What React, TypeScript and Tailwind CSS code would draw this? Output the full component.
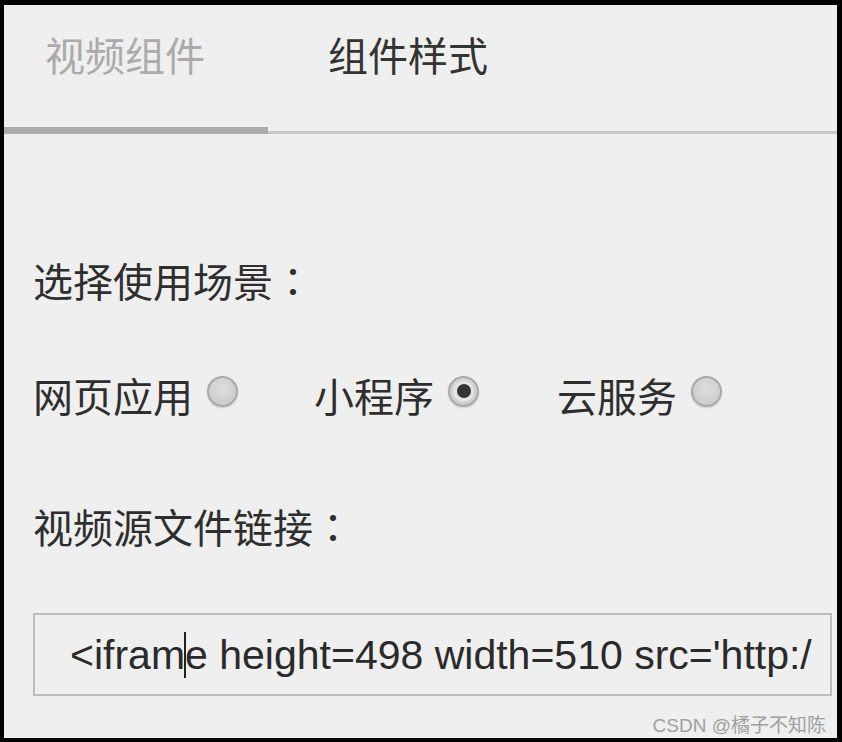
import React from 'react';

const cjk = "font-['Noto_Sans_CJK_SC','Noto_Sans',sans-serif]";

interface RadioProps {
  label: string;
  checked?: boolean;
  className?: string;
}

function Radio({ label, checked, className }: RadioProps) {
  return (
    <div className={`flex items-center ${className || ''}`}>
      <span className="text-[40px] leading-[40px] text-[#2e2e2e]">{label}</span>
      <span className="ml-[14px] mb-[8px] flex h-[31px] w-[31px] items-center justify-center rounded-full border-2 border-[#a9a9a9] bg-[radial-gradient(circle_at_50%_40%,#dedede,#c6c6c6)] shadow-[0_1px_2px_rgba(0,0,0,0.15)]">
        {checked && (
          <span className="flex h-[21px] w-[21px] items-center justify-center rounded-full bg-[#e4e4e4]">
            <span className="h-[14px] w-[14px] rounded-full bg-[#333]" />
          </span>
        )}
      </span>
    </div>
  );
}

// full-width colon sits centred in its cell, as in the TC face
const Colon = () => <span className="font-['Noto_Sans_CJK_TC',sans-serif]">：</span>;

export default function App() {
  return (
    <div className="h-[742px] w-[842px] bg-black pt-[5px] pl-[4px] pr-[5px] pb-[4px]">
      <div className={`relative flex h-full w-full flex-col bg-[#efefef] ${cjk}`}>
        {/* tabs */}
        <div className="flex h-[129px] border-b-[3px] border-[#c6c6c6]">
          <div className="mb-[-3px] h-[129px] w-[264px] border-b-[7px] border-[#ababab] pl-[41px] pt-[29px]">
            <span className="text-[40px] leading-[40px] text-[#ababab]">视频组件</span>
          </div>
          <div className="pl-[60px] pt-[29px]">
            <span className="text-[40px] leading-[40px] text-[#333]">组件样式</span>
          </div>
        </div>

        <div className="mt-[126px] pl-[29px] text-[40px] leading-[40px] text-[#2e2e2e]">
          选择使用场景<Colon />
        </div>

        <div className="mt-[75px] flex pl-[29px]">
          <Radio label="网页应用" />
          <Radio label="小程序" checked className="ml-[76px]" />
          <Radio label="云服务" className="ml-[78px]" />
        </div>

        <div className="mt-[91px] pl-[29px] text-[40px] leading-[40px] text-[#2e2e2e]">
          视频源文件链接<Colon />
        </div>

        <div className="ml-[29px] mt-[67px] flex h-[83px] w-[799px] items-center border-2 border-[#bdbdbd] pl-[35px] pr-[10px]">
          <div className="overflow-hidden whitespace-nowrap font-['Liberation_Sans',Arial,sans-serif] text-[41px] leading-[46px] text-[#2a2a2a]">
            &lt;ifram
            <span className="mx-[-1px] inline-block h-[46px] w-[2px] bg-[#222] align-[-9px]" />
            e height=498 width=510 src='http:/
          </div>
        </div>

        <div className="absolute right-[11px] top-[709px] text-[19px] leading-[19px] text-[#a0a0a0]">
          <span className="font-['Liberation_Sans',Arial,sans-serif]">CSDN @</span>橘子不知陈
        </div>
      </div>
    </div>
  );
}
